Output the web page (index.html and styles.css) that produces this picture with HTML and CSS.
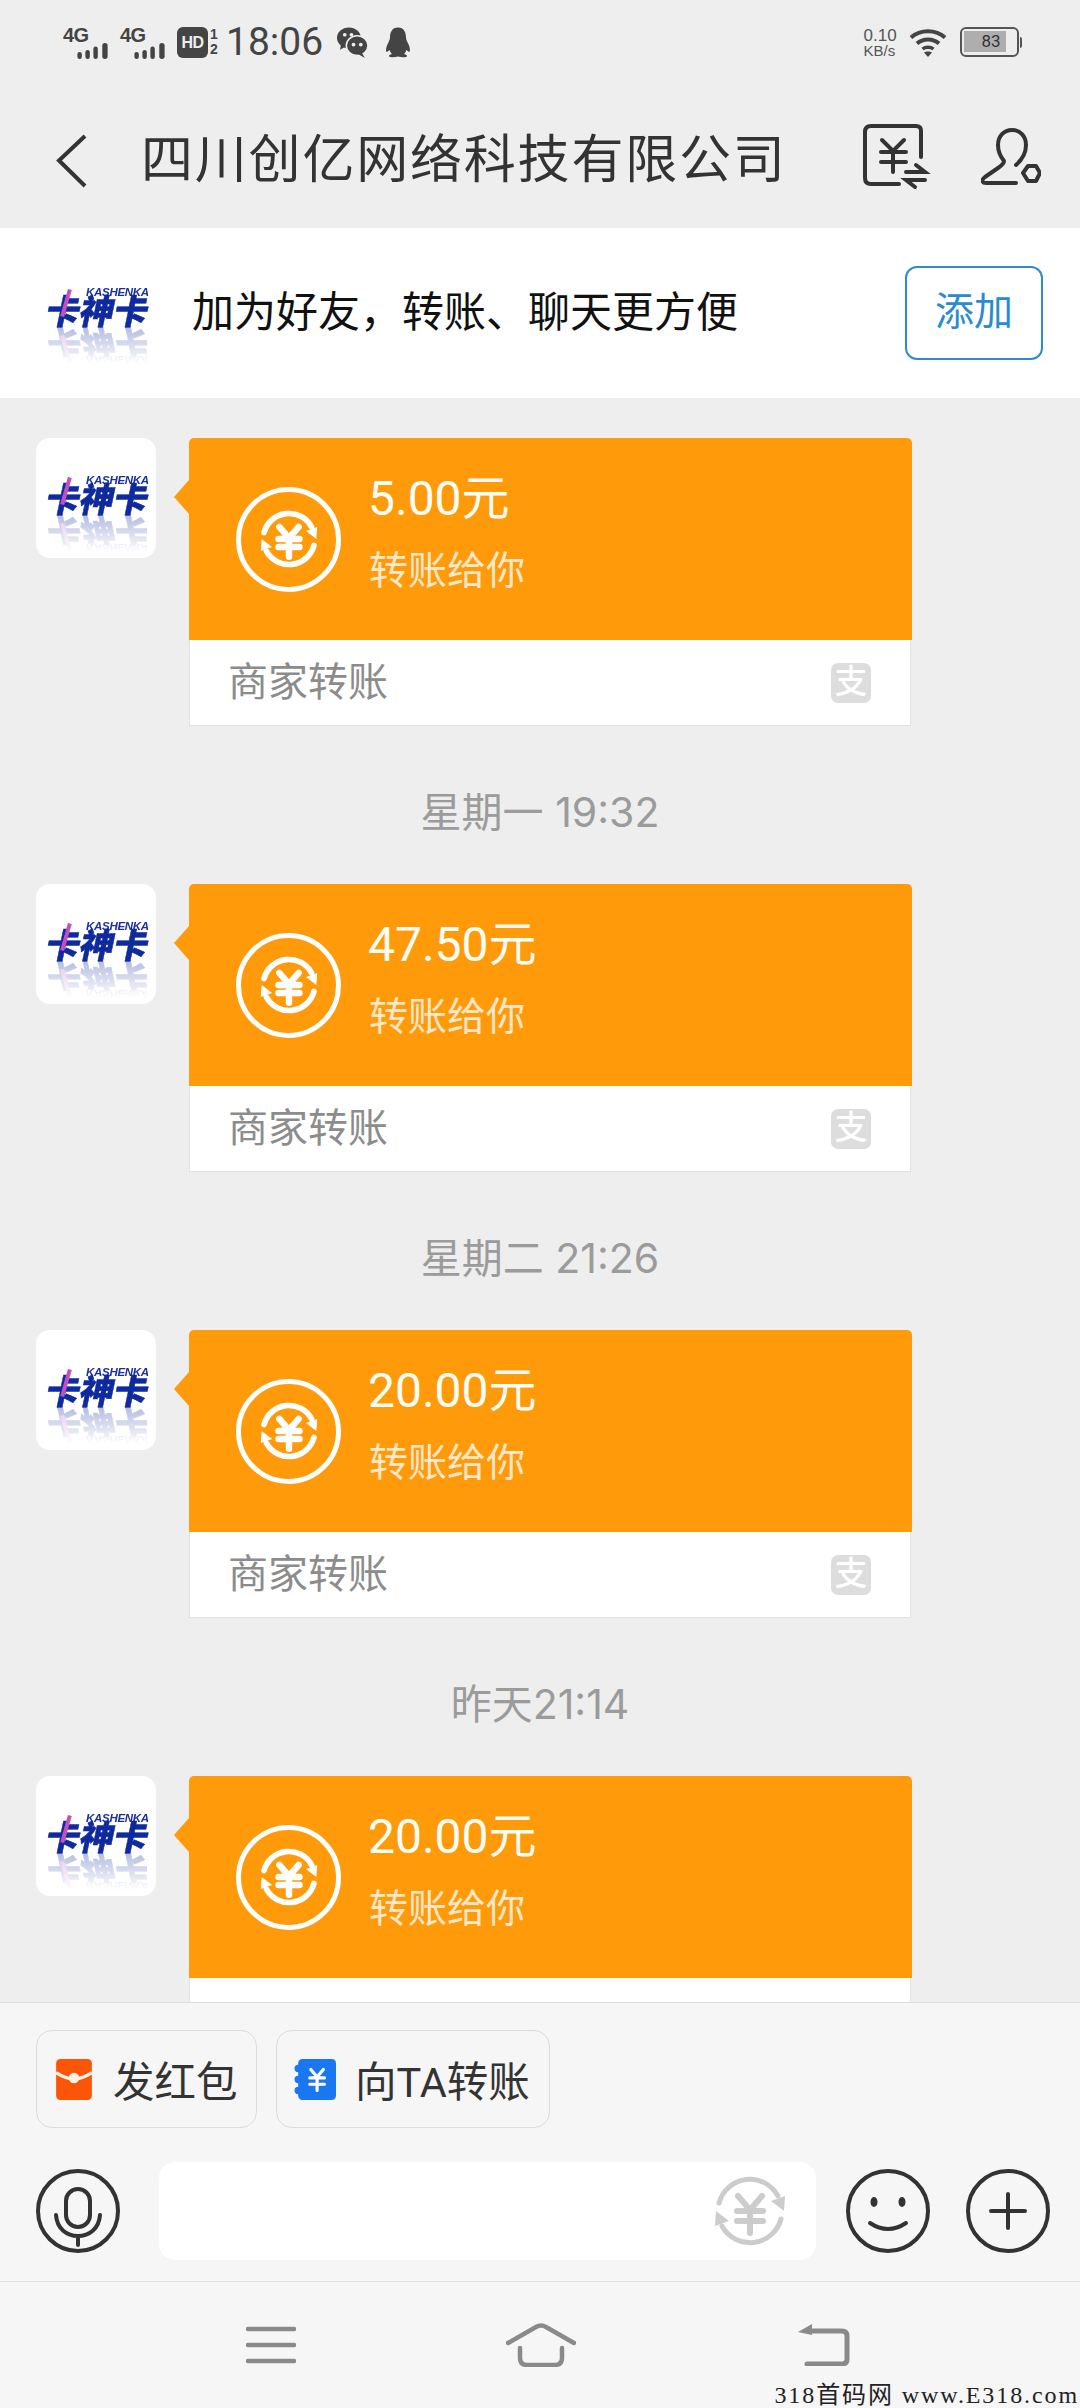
FILE: index.html
```html
<!DOCTYPE html>
<html lang="zh-CN">
<head>
<meta charset="utf-8">
<title>四川创亿网络科技有限公司</title>
<link rel="stylesheet" href="styles.css">
</head>
<body>
<svg class="defs" aria-hidden="true">
  <symbol id="swap" viewBox="0 0 72 72">
    <g fill="none" stroke="currentColor" stroke-linecap="round">
      <path class="swap-arc" d="M5 28A32 32 0 0 1 64 21"/>
      <path class="swap-arc" d="M67 44A32 32 0 0 1 8 51"/>
      <path class="swap-yen" d="M24 21L36 35L48 21M23 36H49M23 46H49M36 35V58"/>
    </g>
    <path d="M57 26L71 21L70 36Z" fill="currentColor"/>
    <path d="M15 46L1 51L2 36Z" fill="currentColor"/>
  </symbol>
  <symbol id="signal" viewBox="0 0 34 18">
    <rect x="0" y="10" width="5" height="8" rx="2.5" fill="currentColor"/>
    <rect x="9" y="8" width="5" height="10" rx="2.5" fill="currentColor"/>
    <rect x="18" y="4" width="5" height="14" rx="2.5" fill="currentColor"/>
    <rect x="28" y="0" width="6" height="18" rx="3" fill="currentColor"/>
  </symbol>
</svg>

<div class="screen">
  <div class="status">
    <div class="status-group">
      <div class="net"><span class="net-label">4G</span><svg class="net-bars"><use href="#signal"/></svg></div>
      <div class="net"><span class="net-label">4G</span><svg class="net-bars"><use href="#signal"/></svg></div>
      <div class="hd">HD</div>
      <div class="sim"><span>1</span><span>2</span></div>
      <div class="clock">18:06</div>
      <svg class="wechat" viewBox="0 0 30 30">
        <ellipse cx="11.5" cy="10.5" rx="11.5" ry="10" fill="#444"/>
        <path d="M4 16L3 22L10 18Z" fill="#444"/>
        <ellipse cx="19.5" cy="18" rx="10.5" ry="9.5" fill="#444" stroke="#eee" stroke-width="1.5"/>
        <path d="M24 25L27 30L20 26Z" fill="#444"/>
        <circle cx="7.5" cy="7.5" r="1.8" fill="#eee"/><circle cx="14" cy="7.5" r="1.8" fill="#eee"/>
        <circle cx="16" cy="17" r="1.8" fill="#eee"/><circle cx="23" cy="17" r="1.8" fill="#eee"/>
      </svg>
      <svg class="qq" viewBox="0 0 26 30">
        <path d="M13 0C7 0 5 5 5 10C5 13 3 15 2 18C1 21 .5 24 2 24.500L4.500 22.500C5 24 6 25.500 7 26.500C5 27 3.500 28 4 29C5 30 10 30 13 29C16 30 21 30 22 29C22.500 28 21 27 19 26.500C20 25.500 21 24 21.500 22.500L24 24.500C25.500 24 25 21 24 18C23 15 21 13 21 10C21 5 19 0 13 0Z" fill="#444"/>
      </svg>
    </div>
    <div class="status-group status-right">
      <div class="speed"><span>0.10</span><span class="speed-unit">KB/s</span></div>
      <svg class="wifi" viewBox="0 0 36 29">
        <path d="M1 9.500C10 1 26 1 35 9.500" fill="none" stroke="#444" stroke-width="4"/>
        <path d="M7 15.500C13 10 23 10 29 15.500" fill="none" stroke="#444" stroke-width="4"/>
        <path d="M12.500 21C15.500 18.500 20.500 18.500 23.500 21" fill="none" stroke="#444" stroke-width="3.500"/>
        <path d="M14 24.500C16 23 20 23 22 24.500L18 29Z" fill="#444"/>
      </svg>
      <div class="battery"><div class="battery-body"><div class="battery-fill">83</div></div><div class="battery-tip"></div></div>
    </div>
  </div>

  <div class="header">
    <svg class="back" viewBox="0 0 32 54"><path d="M29 2L3 26.500L29 52" fill="none" stroke="#333" stroke-width="4"/></svg>
    <div class="title">四川创亿网络科技有限公司</div>
    <svg class="head-bill" viewBox="0 0 64 64">
      <g fill="none" stroke="#333" stroke-width="4" stroke-linecap="round">
        <path d="M58 33V7Q58 2 53 2H8Q2 2 2 8V54Q2 60 8 60H36"/>
        <path d="M19 16L30 27L41 16M18 28H43M18 38H43M30 27V48"/>
        <path d="M43 48H62L53 41M62 56H43L52 63"/>
      </g>
    </svg>
    <svg class="head-person" viewBox="0 0 60 58">
      <g fill="none" stroke="#333" stroke-width="4" stroke-linecap="round" stroke-linejoin="round">
        <path d="M35 37C43 30 45 24 45 17C45 8 39 2 31 2C23 2 17 8 17 17C17 24 19 28 23 33C23 36 20 38 17 40L4 49C0 52 1 55 5 55H35"/>
        <path d="M42 45L47 38H55L59 45L55 53H47Z"/>
      </g>
    </svg>
  </div>

  <div class="banner">
    <div class="banner-logo">
      <div class="logo"><span class="logo-en">KASHENKA</span><span class="logo-cn">卡神卡</span><i class="logo-slash"></i></div>
    </div>
    <div class="banner-text">加为好友，转账、聊天更方便</div>
    <div class="add-btn">添加</div>
  </div>

  <div class="chat">
    <div class="msg">
      <div class="avatar"><div class="logo"><span class="logo-en">KASHENKA</span><span class="logo-cn">卡神卡</span><i class="logo-slash"></i></div></div>
      <div class="card">
        <div class="card-top">
          <div class="card-ring"><svg class="card-swap"><use href="#swap"/></svg></div>
          <div class="card-info"><div class="amount">5.00元</div><div class="sub">转账给你</div></div>
        </div>
        <div class="card-foot"><span class="foot-label">商家转账</span><span class="ali">支</span></div>
      </div>
    </div>
    <div class="time">星期一 19:32</div>
    <div class="msg">
      <div class="avatar"><div class="logo"><span class="logo-en">KASHENKA</span><span class="logo-cn">卡神卡</span><i class="logo-slash"></i></div></div>
      <div class="card">
        <div class="card-top">
          <div class="card-ring"><svg class="card-swap"><use href="#swap"/></svg></div>
          <div class="card-info"><div class="amount">47.50元</div><div class="sub">转账给你</div></div>
        </div>
        <div class="card-foot"><span class="foot-label">商家转账</span><span class="ali">支</span></div>
      </div>
    </div>
    <div class="time">星期二 21:26</div>
    <div class="msg">
      <div class="avatar"><div class="logo"><span class="logo-en">KASHENKA</span><span class="logo-cn">卡神卡</span><i class="logo-slash"></i></div></div>
      <div class="card">
        <div class="card-top">
          <div class="card-ring"><svg class="card-swap"><use href="#swap"/></svg></div>
          <div class="card-info"><div class="amount">20.00元</div><div class="sub">转账给你</div></div>
        </div>
        <div class="card-foot"><span class="foot-label">商家转账</span><span class="ali">支</span></div>
      </div>
    </div>
    <div class="time">昨天21:14</div>
    <div class="msg">
      <div class="avatar"><div class="logo"><span class="logo-en">KASHENKA</span><span class="logo-cn">卡神卡</span><i class="logo-slash"></i></div></div>
      <div class="card">
        <div class="card-top">
          <div class="card-ring"><svg class="card-swap"><use href="#swap"/></svg></div>
          <div class="card-info"><div class="amount">20.00元</div><div class="sub">转账给你</div></div>
        </div>
        <div class="card-foot"></div>
      </div>
    </div>
  </div>

  <div class="panel">
    <div class="chips">
      <div class="chip chip-red">
        <svg class="chip-icon" viewBox="0 0 34 39">
          <rect width="34" height="39" rx="4" fill="#fb5607"/>
          <path d="M0 13Q9 19 17 19Q25 19 34 13" fill="none" stroke="#fff3e8" stroke-width="3"/>
          <circle cx="17" cy="18" r="5" fill="#fff3e8"/>
        </svg>
        <span>发红包</span>
      </div>
      <div class="chip chip-blue">
        <svg class="chip-icon-blue" viewBox="0 0 40 39">
          <rect x="4" width="36" height="39" rx="4" fill="#1a77f2"/>
          <circle cx="4" cy="9" r="3.500" fill="#1a77f2"/><circle cx="4" cy="19.500" r="3.500" fill="#1a77f2"/><circle cx="4" cy="30" r="3.500" fill="#1a77f2"/>
          <path d="M16 10L22 17L28 10M15 18H29M15 24H29M22 17V30" fill="none" stroke="#fff" stroke-width="3" stroke-linecap="round"/>
        </svg>
        <span>向TA转账</span>
      </div>
    </div>
    <div class="input-row">
      <svg class="mic" viewBox="0 0 84 84">
        <circle cx="42" cy="42" r="40" fill="none" stroke="#333" stroke-width="4"/>
        <rect x="30" y="20" width="24" height="38" rx="12" fill="none" stroke="#333" stroke-width="4"/>
        <path d="M20 46C21 60 31 67 42 67C53 67 63 60 64 46M42 67V76" fill="none" stroke="#333" stroke-width="4" stroke-linecap="round"/>
      </svg>
      <div class="input"><svg class="input-swap"><use href="#swap"/></svg></div>
      <svg class="round-btn smile" viewBox="0 0 84 84">
        <circle cx="42" cy="42" r="40" fill="none" stroke="#333" stroke-width="4"/>
        <ellipse cx="28" cy="33" rx="3.500" ry="5" fill="#333"/><ellipse cx="56" cy="33" rx="3.500" ry="5" fill="#333"/>
        <path d="M24 54Q42 66 60 54" fill="none" stroke="#333" stroke-width="4" stroke-linecap="round"/>
      </svg>
      <svg class="round-btn plus" viewBox="0 0 84 84">
        <circle cx="42" cy="42" r="40" fill="none" stroke="#333" stroke-width="4"/>
        <path d="M25 42H59M42 25V59" fill="none" stroke="#333" stroke-width="4" stroke-linecap="round"/>
      </svg>
    </div>
  </div>

  <div class="nav">
    <svg class="nav-menu" viewBox="0 0 50 38"><path d="M2 3H48M2 19H48M2 35H48" fill="none" stroke="#8a8a8a" stroke-width="4.500" stroke-linecap="round"/></svg>
    <svg class="nav-home" viewBox="0 0 70 44"><path d="M2 20L30 4Q35 1 40 4L68 20M14 25V35Q14 42 21 42H49Q56 42 56 35V25" fill="none" stroke="#8a8a8a" stroke-width="4.500" stroke-linecap="round"/></svg>
    <svg class="nav-back" viewBox="0 0 52 42"><path d="M9 40H44Q49 40 49 35V12Q49 7 44 7H12" fill="none" stroke="#8a8a8a" stroke-width="5" stroke-linecap="round"/><path d="M0 8L14 0V11Z" fill="#8a8a8a"/></svg>
  </div>

  <div class="watermark">318首码网 www.E318.com</div>
</div>
</body>
</html>
```
FILE: styles.css
```css
* { box-sizing: border-box; }
html, body { margin: 0; padding: 0; }
body {
  width: 1080px;
  height: 2408px;
  overflow: hidden;
  font-family: "Roboto", "Noto Sans CJK SC", sans-serif;
  background: #eeeeee;
}
.defs { position: absolute; width: 0; height: 0; }
.swap-arc { stroke-width: var(--arc, 5); }
.swap-yen { stroke-width: var(--yen, 6); }
.screen {
  position: relative;
  width: 1080px;
  height: 2408px;
  display: flex;
  flex-direction: column;
  overflow: hidden;
}

/* status bar */
.status {
  flex: none;
  height: 84px;
  display: flex;
  align-items: center;
  justify-content: space-between;
  padding: 0 58px 0 63px;
  color: #444;
}
.status-group { display: flex; align-items: center; }
.net { width: 47px; height: 33px; margin-right: 10px; position: relative; }
.net-label { display: block; font: 700 20px/18px "Liberation Sans", sans-serif; letter-spacing: -0.5px; }
.net-bars { position: absolute; right: 0; bottom: 0; width: 35px; height: 16px; color: #444; }
.hd {
  width: 31px; height: 31px;
  background: #444; color: #eee; border-radius: 6px;
  font: 700 16px/31px "Liberation Sans", sans-serif; text-align: center;
  letter-spacing: -0.5px;
}
.sim { display: flex; flex-direction: column; width: 10px; margin-left: 1px; font: 700 14px/15px "Liberation Sans", sans-serif; text-align: center; }
.clock { margin-left: 7px; font-size: 39px; line-height: 42px; color: #444; width: 98px; white-space: nowrap; }
.wechat { width: 31px; height: 31px; margin-left: 13px; }
.qq { width: 26px; height: 31px; margin-left: 17px; }
.speed { display: flex; flex-direction: column; font: 400 17px/17px "Liberation Sans", sans-serif; width: 46px; color: #555; }
.speed-unit { font-size: 15px; line-height: 14px; }
.wifi { width: 36px; height: 29px; }
.battery { display: flex; align-items: center; margin-left: 14px; }
.battery-body { width: 59px; height: 30px; border: 2.5px solid #555; border-radius: 6px; padding: 2px; }
.battery-fill { width: 42px; height: 21px; background: #aeaeae; color: #333; font-size: 17px; line-height: 21px; text-align: right; padding-right: 5px; }
.battery-tip { width: 2.5px; height: 11px; background: #555; margin-left: 1px; border-radius: 0 2px 2px 0; }

/* header */
.header {
  flex: none;
  height: 144px;
  display: flex;
  align-items: center;
  padding-left: 56px;
}
.back { width: 32px; height: 54px; flex: none; margin-top: 10px; }
.title {
  margin-left: 53px;
  margin-top: 10px;
  font-size: 52px;
  letter-spacing: 1.8px;
  color: #333;
  white-space: nowrap;
  width: 722px;
  flex: none;
  line-height: 60px;
}
.head-bill { width: 64px; height: 64px; flex: none; overflow: visible; }
.head-person { width: 60px; height: 58px; margin-left: 54px; flex: none; margin-top: 2px; }

/* banner */
.banner {
  flex: none;
  height: 170px;
  background: #fff;
  display: flex;
  align-items: center;
  padding: 0 37px 0 47px;
}
.banner-logo { width: 145px; flex: none; padding-top: 41px; height: 134px; }
.banner-text { flex: 1; font-size: 42px; color: #111; white-space: nowrap; line-height: 50px; }
.add-btn {
  width: 138px; height: 94px;
  border: 2.5px solid #2f8bcf; border-radius: 12px;
  color: #2a8bd0; font-size: 39px; line-height: 88px; text-align: center;
  flex: none;
}

/* logo */
.logo {
  position: relative;
  width: 100px;
  height: 39px;
  -webkit-box-reflect: below 0 linear-gradient(to bottom, rgba(255,255,255,0) 0%, rgba(255,255,255,.32) 100%);
}
.logo-en {
  position: absolute; left: 39px; top: 0;
  font: italic 700 11.5px/10px "Liberation Sans", sans-serif;
  color: #1b2f9f; white-space: nowrap;
  letter-spacing: -0.3px;
}
.logo-cn {
  position: absolute; left: 0; top: 6px;
  display: block;
  font-family: "Noto Sans CJK SC", sans-serif;
  font-weight: 900; font-size: 34px; line-height: 34px;
  color: #0f2a9e; white-space: nowrap;
  -webkit-text-stroke: .5px #0f2a9e;
  transform: skewX(-12deg);
}
.logo-slash {
  position: absolute; left: 17px; top: 2px;
  width: 4px; height: 28px;
  background: #c44fc0;
  transform: rotate(16deg);
}

/* chat */
.chat {
  flex: 1;
  min-height: 0;
  overflow: hidden;
  padding-top: 40px;
}
.msg { display: flex; padding-left: 36px; height: 288px; }
.avatar {
  width: 120px; height: 120px;
  background: #fff; border-radius: 14px;
  flex: none;
  padding: 37px 0 0 11px;
}
.card {
  position: relative;
  width: 723px;
  margin-left: 33px;
  flex: none;
  display: flex;
  flex-direction: column;
}
.card::before {
  content: "";
  position: absolute;
  left: -15px; top: 42px;
  width: 15px; height: 34px;
  background: #ff9a0b;
  clip-path: polygon(100% 0, 0 50%, 100% 100%);
}
.card-top {
  height: 202px;
  flex: none;
  background: #ff9a0b;
  border-radius: 5px 5px 0 0;
  display: flex;
  align-items: center;
  padding-left: 47px;
}
.card-ring {
  width: 105px; height: 105px;
  border: 5px solid #fff; border-radius: 50%;
  display: flex; align-items: center; justify-content: center;
  flex: none;
  --arc: 7;
  --yen: 8;
}
.card-swap { width: 58px; height: 58px; color: #fff; }
.card-info { margin-left: 27px; color: #fff; margin-top: -14px; }
.amount { font-size: 48px; line-height: 62px; color: #fffdf5; white-space: nowrap; }
.sub { font-size: 39px; line-height: 52px; margin-top: 15px; margin-left: 1px; color: rgba(255,255,255,.78); white-space: nowrap; }
.card-foot {
  height: 86px;
  width: 722px;
  flex: none;
  background: #fff;
  border: 1px solid #e2e2e2;
  border-top: 0;
  display: flex;
  align-items: center;
  justify-content: space-between;
  padding: 0 39px 0 38px;
  font-size: 40px;
  color: #8c8c8c;
}
.foot-label { margin-top: -8px; }
.ali {
  width: 40px; height: 40px;
  background: #dddddd; border-radius: 7px;
  color: #fff; font-size: 33px; line-height: 38px; text-align: center;
  font-weight: 500;
}
.time {
  height: 158px;
  padding-top: 58px;
  text-align: center;
  font-family: "Inter", "Noto Sans CJK SC", sans-serif;
  font-size: 41px;
  line-height: 56px;
  color: #9b9b9b;
}

/* bottom panel */
.panel {
  flex: none;
  height: 280px;
  background: #f6f6f6;
  border-top: 1.5px solid #dcdcdc;
  border-bottom: 1.5px solid #e0e0e0;
  padding: 27px 30px 0 36px;
}
.chips { display: flex; gap: 19px; }
.chip {
  height: 98px;
  border: 1.5px solid #dcdcdc;
  border-radius: 16px;
  display: flex;
  align-items: center;
  font-size: 41.5px;
  color: #333;
  white-space: nowrap;
}
.chip-red { width: 221px; padding-left: 19px; }
.chip-blue { width: 274px; padding-left: 17px; }
.chip-icon { width: 36px; height: 41px; margin-right: 21px; flex: none; }
.chip-icon-blue { width: 42px; height: 41px; margin-right: 19px; flex: none; }
.input-row { display: flex; align-items: center; margin-top: 34px; }
.mic { width: 84px; height: 84px; flex: none; }
.input {
  width: 657px; height: 98px;
  margin-left: 39px;
  background: #fff;
  border-radius: 16px;
  display: flex;
  align-items: center;
  justify-content: flex-end;
  padding-right: 30px;
  flex: none;
}
.input-swap { width: 72px; height: 72px; color: #cccccc; }
.round-btn { width: 84px; height: 84px; flex: none; }
.smile { margin-left: 30px; }
.plus { margin-left: 36px; }

/* navigation */
.nav {
  flex: none;
  height: 126px;
  background: #f6f6f6;
  display: flex;
  align-items: center;
  padding-left: 246px;
}
.nav-menu { width: 50px; height: 38px; flex: none; }
.nav-home { width: 70px; height: 44px; margin-left: 210px; flex: none; }
.nav-back { width: 52px; height: 42px; margin-left: 222px; flex: none; }

/* overlay watermark */
.watermark {
  position: absolute;
  right: 1px;
  bottom: 0;
  font-family: "Liberation Serif", "Noto Sans CJK SC", serif;
  font-size: 24px;
  line-height: 26px;
  letter-spacing: 1.9px;
  color: #222;
  white-space: nowrap;
}
```
